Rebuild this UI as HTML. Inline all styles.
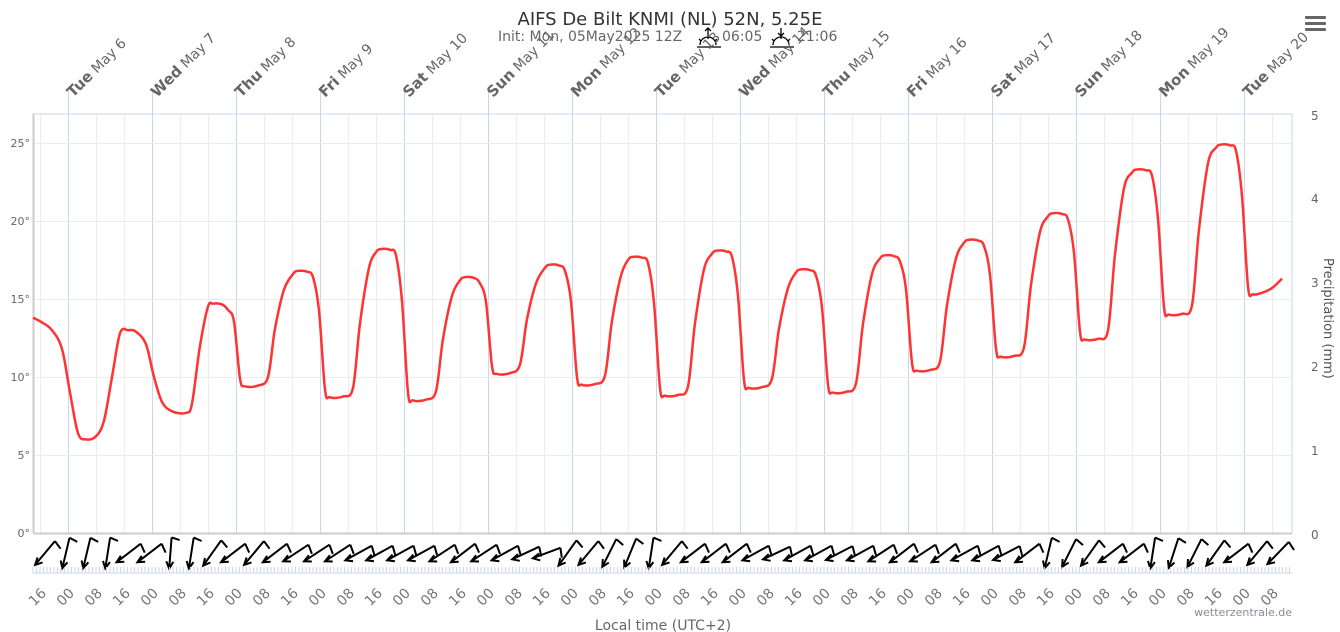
<!DOCTYPE html>
<html><head><meta charset="utf-8"><style>
html,body{margin:0;padding:0;background:#fff;width:1340px;height:632px;overflow:hidden}
svg{display:block;font-family:"DejaVu Sans","Liberation Sans",sans-serif}
</style></head><body>
<svg id="s" width="1340" height="632" xmlns="http://www.w3.org/2000/svg">
<g id="grid"></g>
<rect x="33" y="114" width="1259" height="419" fill="none" stroke="#ccd6eb" stroke-width="1"/>
<line x1="33" y1="533.5" x2="1292" y2="533.5" stroke="#ccc" stroke-width="2"/>
<line x1="33.5" y1="114" x2="33.5" y2="533" stroke="#ccc" stroke-width="2"/>
<g font-size="11" fill="#666" text-anchor="end">
<text x="30" y="147">25°</text><text x="30" y="225">20°</text><text x="30" y="303">15°</text>
<text x="30" y="381">10°</text><text x="30" y="459">5°</text><text x="30" y="537">0°</text>
</g>
<g font-size="12" fill="#666">
<text x="1311" y="120">5</text><text x="1311" y="203">4</text><text x="1311" y="287">3</text>
<text x="1311" y="371">2</text><text x="1311" y="455">1</text><text x="1311" y="539">0</text>
<text transform="translate(1324,258) rotate(90)" font-size="13" fill="#555">Precipitation (mm)</text>
</g>
<text x="670" y="25" font-size="18" fill="#333" text-anchor="middle">AIFS De Bilt KNMI (NL) 52N, 5.25E</text>
<text x="498" y="41" font-size="14" fill="#666">Init: Mon, 05May2025 12Z</text>
<text x="722" y="41" font-size="14" fill="#666">06:05</text>
<text x="797" y="41" font-size="14" fill="#666">21:06</text>
<g stroke="#000" stroke-width="1.3" fill="none">
<path d="M697 47h24M700 45a8 8 0 0 1 16 0M708 28v8M705 31l3-3 3 3M699 39l2 2M717 39l-2 2M708 37v2"/>
<path d="M770 47h24M773 45a8 8 0 0 1 16 0M781 28v8M778 33l3 3 3-3M772 39l2 2M790 39l-2 2M781 37v2"/>
</g>
<g fill="#666"><rect x="1305" y="16" width="21" height="3" rx="1"/><rect x="1305" y="22" width="21" height="3" rx="1"/><rect x="1305" y="28" width="21" height="3" rx="1"/></g>
<g id="days" font-size="14" fill="#666"></g>
<path id="temp" fill="none" stroke="#ff3333" stroke-width="2.5" stroke-linejoin="round"/>
<g id="wind" stroke="#000" stroke-width="2" fill="none"></g>
<g id="ticks" stroke="#ccd6eb" stroke-width="1"></g>
<g id="hours" font-size="14" fill="#777"></g>
<text x="1292" y="616" font-size="11" fill="#8a8a9a" text-anchor="end">wetterzentrale.de</text>
<text x="663" y="630" font-size="14" fill="#666" text-anchor="middle">Local time (UTC+2)</text>
</svg>
<script>
var NS="http://www.w3.org/2000/svg";
function el(p,t,a,txt){var e=document.createElementNS(NS,t);for(var k in a)e.setAttribute(k,a[k]);if(txt!=null)e.textContent=txt;document.getElementById(p).appendChild(e);return e;}
function Y(t){return 533-t*15.6;}
for(var x=40;x<1292;x+=28){el("grid","line",{x1:x+.5,y1:114,x2:x+.5,y2:533,stroke:"#ececec"});}
for(var x=68;x<1292;x+=84){el("grid","line",{x1:x+.5,y1:90,x2:x+.5,y2:533,stroke:"#ccd6eb"});}
for(var t=5;t<=25;t+=5){el("grid","line",{x1:33,y1:Y(t)+.5,x2:1292,y2:Y(t)+.5,stroke:"#ececec"});}
for(var x=33;x<=1292;x+=3.5){el("ticks","line",{x1:x,y1:567,x2:x,y2:573});}
el("ticks","line",{x1:33,y1:573,x2:1292,y2:573});
var hl=["16","00","08"];
for(var i=0;i<45;i++){var x=40+i*28;if(x>1290)break;el("hours","text",{transform:"translate("+(x+7)+",594) rotate(-45)","text-anchor":"end"},hl[i%3]);}
var days=[["Tue","May 6"],["Wed","May 7"],["Thu","May 8"],["Fri","May 9"],["Sat","May 10"],["Sun","May 11"],["Mon","May 12"],["Tue","May 13"],["Wed","May 14"],["Thu","May 15"],["Fri","May 16"],["Sat","May 17"],["Sun","May 18"],["Mon","May 19"],["Tue","May 20"]];
days.forEach(function(d,i){var x=68+i*84;var t=el("days","text",{transform:"translate("+(x+5)+",98) rotate(-45)"});
var b=document.createElementNS(NS,"tspan");b.setAttribute("font-weight","bold");b.setAttribute("font-size","15");b.textContent=d[0];t.appendChild(b);
var s=document.createElementNS(NS,"tspan");s.textContent=" "+d[1];t.appendChild(s);});
var pts=[[33,13.8],[42,13.5],[52,13],[62,11.8],[70,9],[78,6.4],[86,6],[96,6.2],[104,7.2],[112,10],[120,12.8],[128,13],[136,12.9],[146,12.1],[154,10],[162,8.4],[172,7.8],[186,7.7],[192,8.3],[200,12]];
var cyc=[[208,14.7,9.4],[293,16.8,8.7],[376,18.2,8.5],[460,16.4,10.2],[545,17.2,9.5],[628,17.7,8.8],[712,18.1,9.3],[796,16.9,9.0],[880,17.8,10.4],[964,18.8,11.3],[1048,20.5,12.4],[1132,23.3,14.0],[1216,24.9,15.3]];
cyc.forEach(function(c,i){var x0=c[0],a=c[1],b=c[2];var m=(a+b)/2;
pts.push([x0,a-0.2],[x0+5,a],[x0+14,a-0.05],[x0+20,a-0.4],[x0+26,m+1.5],[x0+32,b+0.5],[x0+37,b]);
if(i<cyc.length-1){pts.push([x0+50,b+0.05],[x0+60,b+0.6]);var n=cyc[i+1][1];pts.push([x0+67,(b+n)/2],[x0+76,n-1.2]);}
});
pts.push([1262,15.4],[1272,15.7],[1282,16.3]);
var P=pts.map(function(p){return [p[0],Y(p[1])];});
var d="M"+P[0][0]+" "+P[0][1];
for(var i=0;i<P.length-1;i++){var p0=P[i-1]||P[i],p1=P[i],p2=P[i+1],p3=P[i+2]||P[i+1];
var c1x=p1[0]+(p2[0]-p0[0])/6,c1y=p1[1]+(p2[1]-p0[1])/6,c2x=p2[0]-(p3[0]-p1[0])/6,c2y=p2[1]-(p3[1]-p1[1])/6;
d+=" C"+c1x.toFixed(1)+" "+c1y.toFixed(1)+" "+c2x.toFixed(1)+" "+c2y.toFixed(1)+" "+p2[0]+" "+p2[1];}
document.getElementById("temp").setAttribute("d",d);
var ang=[45,15,15,10,0,0,5,10,40,0,45,60,65,65,65,70,70,70,70,65,60,65,70,75,80,40,45,30,25,10,45,0,0,60,70,75,70,70,72,70,65,60,65,60,70,70,72,0,15,30,40,0,0,10,20,30,40,0,45,50,40,35,35,40,45,45,90,60,70,75,70,45,55,60,90,40,60,90,60,90];
for(var i=0;i<60;i++){var cx=45+i*20.9;if(cx>1290)break;var a=(ang[i]||60)*Math.PI/180;
var L=28,dx=-Math.sin(a),dy=Math.cos(a);var hx=cx+dx*L/2,hy=552+dy*L/2*0.9+4,tx=cx-dx*L/2,ty=552-dy*L/2*0.9-2;
var px=-dy,py=dx;
el("wind","path",{d:"M"+tx.toFixed(1)+" "+ty.toFixed(1)+"L"+hx.toFixed(1)+" "+hy.toFixed(1)+
"M"+(hx-dx*7+px*3.5).toFixed(1)+" "+(hy-dy*7+py*3.5).toFixed(1)+"L"+hx.toFixed(1)+" "+hy.toFixed(1)+"L"+(hx-dx*7-px*3.5).toFixed(1)+" "+(hy-dy*7-py*3.5).toFixed(1)+
"M"+tx.toFixed(1)+" "+ty.toFixed(1)+"L"+(tx+Math.cos(a)*8).toFixed(1)+" "+(ty+Math.sin(a)*8+2).toFixed(1)});}
</script>
</body></html>
